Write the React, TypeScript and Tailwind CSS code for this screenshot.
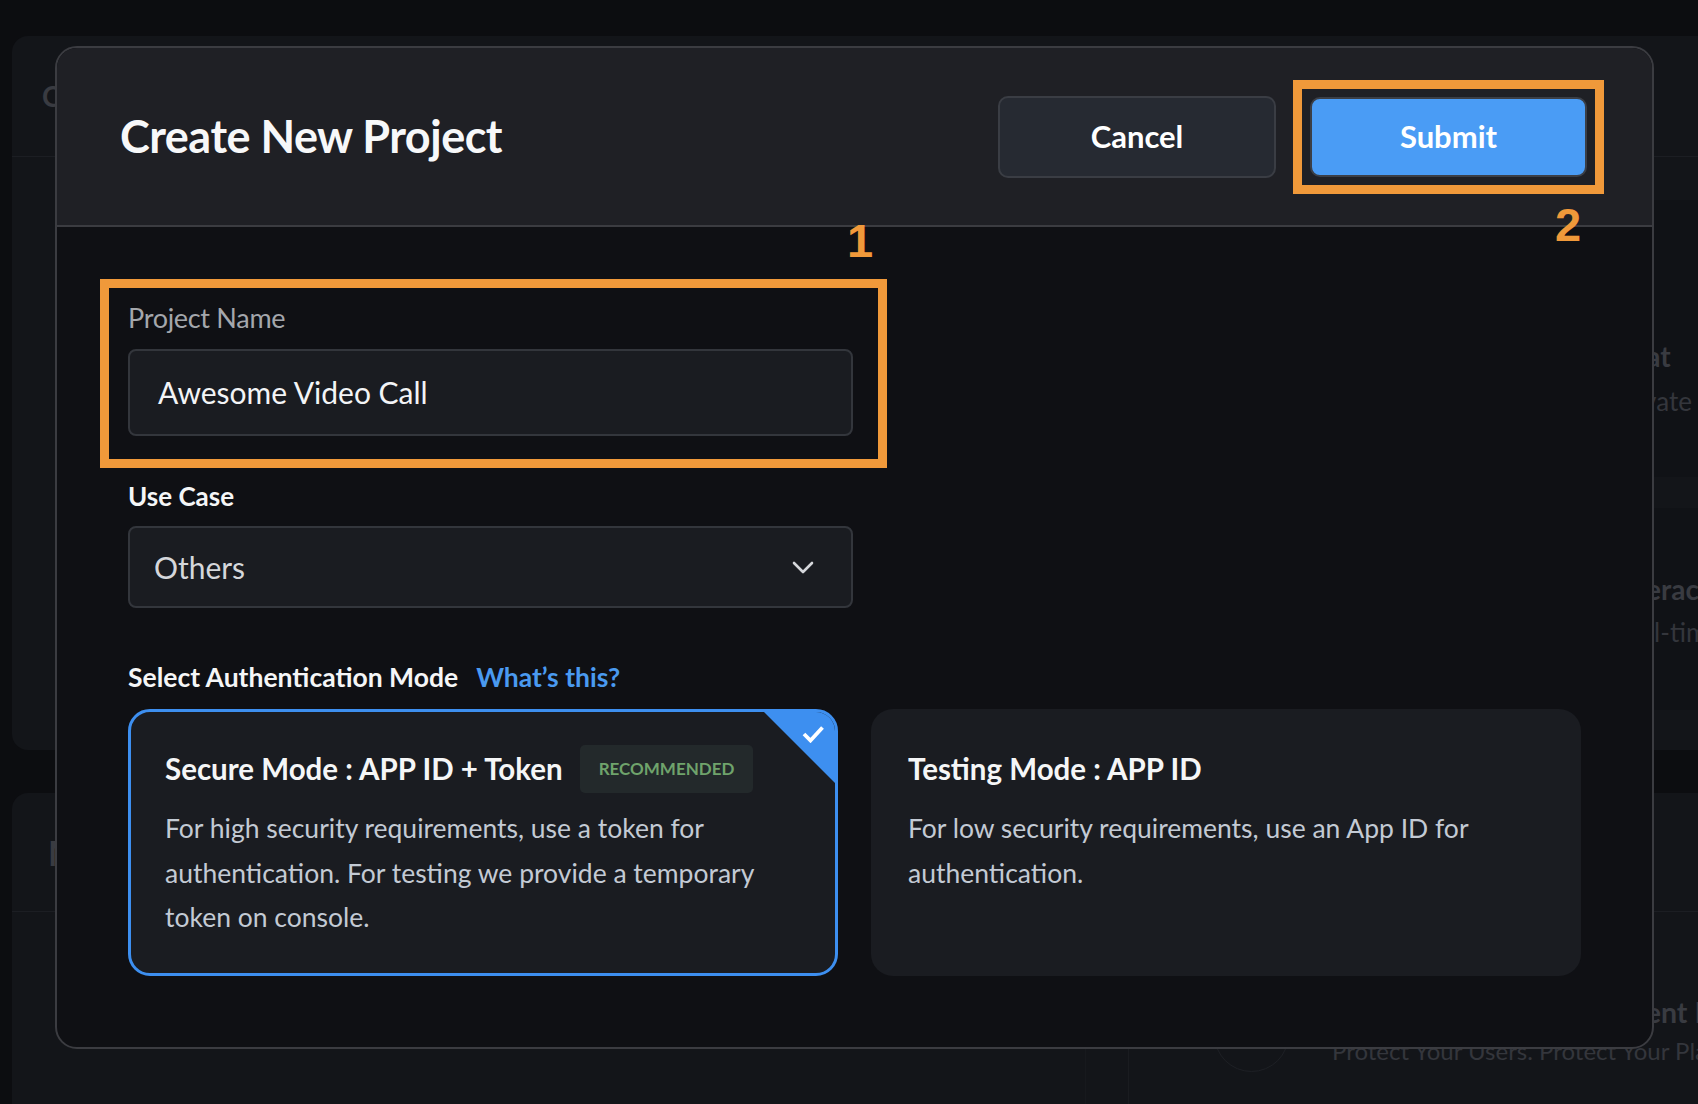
import React from "react";

// ── Small drawings ───────────────────────────────────────────────
function CheckMark() {
  return (
    <svg viewBox="0 0 22 18" className="h-[18px] w-[22px]" fill="none" stroke="white" strokeWidth="3.8">
      <path d="M2 9l6.5 6.5L20.5 2.5" />
    </svg>
  );
}

function Chevron() {
  return (
    <svg viewBox="0 0 22 13" className="h-[13px] w-[22px]" fill="none" stroke="#d5d7db" strokeWidth="2.6" strokeLinecap="round" strokeLinejoin="round">
      <path d="M2 2l9 9 9-9" />
    </svg>
  );
}

// ── Dimmed console page behind the modal ─────────────────────────
function Backdrop() {
  return (
    <div className="flex flex-col gap-[43px] pl-[12px] pt-[36px]">
      <section className="h-[714px] rounded-l-[16px] bg-[#131519]">
        <div className="flex h-[121px] items-center border-b border-[#1c1e23] pl-[30px]">
          <span className="text-[28px] font-bold text-[#393b41]">Console</span>
        </div>
        <div className="flex justify-end pt-[43px]">
          <div className="flex w-[108px] flex-col gap-[31px]">
            <div className="h-[277px] whitespace-nowrap rounded-l-[12px] bg-[#101216] pl-[22px] pt-[141px]">
              <p className="text-[28px] font-bold leading-[30px] text-[#393b41]">Chat</p>
              <p className="mt-[15px] text-[26px] leading-[30px] text-[#34363c]">Private messaging</p>
            </div>
            <div className="h-[202px] whitespace-nowrap rounded-l-[12px] bg-[#101216] pl-[22px] pt-[66px]">
              <p className="text-[28px] font-bold leading-[30px] text-[#393b41]">Interactive Live Streaming</p>
              <p className="mt-[13px] text-[26px] leading-[30px] text-[#34363c]">Real-time engagement</p>
            </div>
          </div>
        </div>
      </section>

      <section className="h-[400px] rounded-l-[16px] bg-[#131519]">
        <div className="flex h-[119px] items-center border-b border-[#1c1e23] pl-[36px]">
          <span className="text-[34px] font-bold text-[#393b41]">Monitor</span>
        </div>
        <div className="flex h-[281px]">
          <div className="w-[1074px] shrink-0 border-r border-[#17191d]" />
          <div className="ml-[42px] flex min-w-0 flex-1 items-start gap-[43px] whitespace-nowrap border-l border-[#1a1c20] pl-[85px] pt-[85px]">
            <div className="h-[75px] w-[75px] shrink-0 rounded-full border border-[#1e2025]" />
            <div>
              <p className="text-[28.5px] font-bold leading-[30px] text-[#393b41]">Fraud Prevention &amp; Content Moderation</p>
              <p className="mt-[9px] text-[24px] leading-[30px] text-[#34363c]">Protect Your Users. Protect Your Platform.</p>
            </div>
          </div>
        </div>
      </section>
    </div>
  );
}

// ── Auth mode card ───────────────────────────────────────────────
function ModeCard({
  title,
  lines,
  selected,
  badge,
}: {
  title: string;
  lines: string[];
  selected?: boolean;
  badge?: string;
}) {
  return (
    <div
      className={
        selected
          ? "relative h-[267px] overflow-hidden rounded-[22px] border-[3px] border-[#3d8ff0] bg-[#1a1c21] px-[34px] pt-[33px]"
          : "relative h-[267px] overflow-hidden rounded-[22px] border-[3px] border-transparent bg-[#1a1c21] px-[34px] pt-[33px]"
      }
    >
      {selected && (
        <>
          <svg viewBox="0 0 71 71" className="absolute right-0 top-0 h-[71px] w-[71px]">
            <polygon points="0,0 71,0 71,71" fill="#3d8ff0" />
          </svg>
          <div className="absolute right-[11px] top-[13px]">
            <CheckMark />
          </div>
        </>
      )}
      <div className="flex h-[48px] items-center gap-[17px]">
        <h3 className="whitespace-nowrap text-[29.5px] font-bold text-[#f5f6f7]">{title}</h3>
        {badge && (
          <span className="flex h-[48px] items-center rounded-[5px] bg-[#23292b] px-[19px] text-[17px] font-bold text-[#6fa36b]">
            {badge}
          </span>
        )}
      </div>
      <p className="mt-[13px] text-[26.5px] leading-[44.5px] text-[#c3cad4]">
        {lines.map((l, i) => (
          <React.Fragment key={i}>
            {i > 0 && <br />}
            {l}
          </React.Fragment>
        ))}
      </p>
    </div>
  );
}

// ── Modal ────────────────────────────────────────────────────────
function CreateProjectModal() {
  return (
    <div className="absolute left-[55px] top-[46px] flex h-[1003px] w-[1599px] flex-col overflow-hidden rounded-[22px] border-2 border-[#3b3c41] bg-[#0f1014]">
      {/* Header */}
      <header className="flex h-[179px] shrink-0 items-center border-b-2 border-[#3b3c41] bg-[#1f2025] pl-[63px] pr-[48px]">
        <h1 className="text-[45px] font-bold leading-none tracking-[-0.5px] text-[#f7f8f9]">Create New Project</h1>
        <div className="ml-auto flex items-center gap-[17px]">
          <button className="h-[82px] w-[278px] rounded-[10px] border-2 border-[#3a3d44] bg-[#262a32] text-[31px] font-bold text-white">
            Cancel
          </button>
          <div className="relative border-[9px] border-[#f0993a] p-[8px]">
            <button className="block h-[80px] w-[277px] rounded-[10px] border-2 border-[#3b3f47] bg-[#4a9cf5] text-[31px] font-bold text-white">
              Submit
            </button>
            <span className="absolute left-[253px] top-[112px] font-['Liberation_Sans',sans-serif] text-[47px] font-bold leading-none text-[#f0993a]">
              2
            </span>
          </div>
        </div>
      </header>

      {/* Body */}
      <div className="relative flex-1 px-[71px] pt-[52px]">
        <span className="absolute left-[790px] top-[-10px] font-['Liberation_Sans',sans-serif] text-[47px] font-bold leading-none text-[#f0993a]">
          1
        </span>

        <div className="ml-[-28px] w-[787px] border-[9px] border-[#f0993a] pb-[23px] pl-[19px] pr-[25px] pt-[15px]">
          <label className="block text-[27px] leading-[30px] tracking-[-0.3px] text-[#a4a7ac]">Project Name</label>
          <div className="mt-[16px] flex h-[87px] items-center rounded-[8px] border-2 border-[#33363c] bg-[#1a1c21] pl-[28px] text-[30px] text-[#f3f4f6]">
            Awesome Video Call
          </div>
        </div>

        <label className="mt-[14px] block text-[26px] font-bold leading-[28px] text-[#f5f6f7]">Use Case</label>
        <div className="mt-[16px] flex h-[82px] w-[725px] items-center justify-between rounded-[8px] border-2 border-[#33363c] bg-[#1a1c21] pl-[24px] pr-[37px] text-[30px] text-[#d5d7db]">
          <span>Others</span>
          <Chevron />
        </div>

        <div className="mt-[54px] flex items-baseline gap-[18px] text-[26.5px] font-bold leading-[30px]">
          <span className="text-[#f5f6f7]">Select Authentication Mode</span>
          <span className="text-[#4a9af0]">What’s this?</span>
        </div>

        <div className="mt-[17px] grid grid-cols-2 gap-[33px]">
          <ModeCard
            selected
            title="Secure Mode : APP ID + Token"
            badge="RECOMMENDED"
            lines={[
              "For high security requirements, use a token for",
              "authentication. For testing we provide a temporary",
              "token on console.",
            ]}
          />
          <ModeCard
            title="Testing Mode : APP ID"
            lines={["For low security requirements, use an App ID for", "authentication."]}
          />
        </div>
      </div>
    </div>
  );
}

export default function App() {
  return (
    <div className="relative h-[1104px] w-full overflow-hidden bg-[#0c0d10] font-['Lato',sans-serif]">
      <Backdrop />
      <CreateProjectModal />
    </div>
  );
}
